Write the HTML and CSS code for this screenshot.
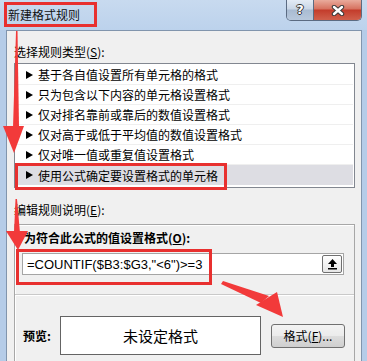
FILE: index.html
```html
<!DOCTYPE html>
<html lang="zh-CN">
<head>
  <meta charset="UTF-8" />
  <meta name="viewport" content="width=device-width, initial-scale=1.0" />
  <title>新建格式规则</title>
  <link rel="stylesheet" href="styles.css">
</head>
<body>
  <div class="window">
    <div class="titlebar">
      <span class="title">新建格式规则</span>
      <div class="controls">
        <div class="btn-help">?</div>
        <div class="btn-close">
          <svg width="14" height="11" viewBox="0 0 14 11">
            <path d="M3 2 L11 9 M11 2 L3 9" stroke="#3a3a3a" stroke-width="4.4" stroke-linecap="round" fill="none"/>
            <path d="M3 2 L11 9 M11 2 L3 9" stroke="#fff" stroke-width="2.4" stroke-linecap="round" fill="none"/>
          </svg>
        </div>
      </div>
    </div>

    <div class="client">
      <div class="label">选择规则类型(<u>S</u>):</div>
      <ul class="rule-list">
        <li>基于各自值设置所有单元格的格式</li>
        <li>只为包含以下内容的单元格设置格式</li>
        <li>仅对排名靠前或靠后的数值设置格式</li>
        <li>仅对高于或低于平均值的数值设置格式</li>
        <li>仅对唯一值或重复值设置格式</li>
        <li class="selected">使用公式确定要设置格式的单元格</li>
      </ul>

      <div class="label label-edit">编辑规则说明(<u>E</u>):</div>
      <div class="group">
        <div class="group-title">为符合此公式的值设置格式(<u>O</u>):</div>
        <div class="formula">
          <span class="formula-text">=COUNTIF($B3:$G3,"&lt;6")&gt;=3</span>
          <div class="collapse">
            <svg width="11" height="12" viewBox="0 0 11 12">
              <polygon points="5.5,1 1,6 10,6" fill="#000"/>
              <rect x="4" y="6" width="3" height="3" fill="#000"/>
              <rect x="1" y="10" width="9" height="1.5" fill="#000"/>
            </svg>
          </div>
        </div>
        <div class="sep"></div>
        <div class="preview-row">
          <span class="preview-label">预览:</span>
          <div class="preview">未设定格式</div>
          <div class="format-btn">格式(<u>F</u>)...</div>
        </div>
      </div>
    </div>

    <!-- annotations drawn over the dialog -->
    <svg class="marks" width="367" height="361" viewBox="0 0 367 361">
      <g fill="none" stroke="#e8302f" stroke-width="3">
        <rect x="5.5" y="3.5" width="90" height="22"/>
        <rect x="16.5" y="164.5" width="209" height="24"/>
        <rect x="17.5" y="250.5" width="193" height="33"/>
      </g>
      <g fill="#f23a3a">
        <polygon points="16,31 17.5,31 19,127 13,127"/>
        <polygon points="3,126 24,126 14,153"/>
        <polygon points="15.5,199 17,199 20,233 14,233"/>
        <polygon points="6,231 28,231 18,250"/>
        <polygon points="221,284 223,281 269,296 261,303"/>
        <polygon points="256,305 277,292 283,317"/>
      </g>
    </svg>
  </div>
</body>
</html>
```

FILE: styles.css
```css
body {
  margin: 0;
  background: #b7cde8;
  font-family: "Noto Sans CJK SC", "Microsoft YaHei", sans-serif;
  font-size: 12px;
  color: #000;
}

.window {
  position: relative;
  width: 367px;
  height: 361px;
  overflow: hidden;
  display: flex;
  flex-direction: column;
  background: #b5cce8;
}

.titlebar {
  flex: none;
  height: 30px;
  display: flex;
  align-items: flex-start;
  background: linear-gradient(#c8daef, #bcd2ec);
}

.title {
  padding: 7px 0 0 8px;
  line-height: 16px;
  color: #111;
}

.controls {
  margin-left: auto;
  margin-right: 5px;
  display: flex;
  height: 20px;
  border: 1px solid #5b6b82;
  border-top: none;
  border-radius: 0 0 5px 5px;
  overflow: hidden;
}

.btn-help {
  width: 26px;
  border-right: 1px solid #5b6b82;
  background: linear-gradient(#e3ebf5 0%, #c9d6e6 45%, #a9bbd2 50%, #b8c8dc 100%);
  color: #fff;
  font-family: "DejaVu Sans", sans-serif;
  font-weight: bold;
  font-size: 13px;
  line-height: 20px;
  text-align: center;
  text-shadow: 1px 0 #333, -1px 0 #333, 0 1px #333, 0 -1px #333;
}

.btn-close {
  width: 47px;
  display: flex;
  align-items: center;
  justify-content: center;
  background: linear-gradient(#e9ab9c 0%, #d6715f 45%, #c33c2b 50%, #d0604c 100%);
}

.client {
  flex: none;
  margin: 0 5px 0 6px;
  border: 1px solid #8195ad;
  border-bottom: none;
  background: #f0f0f0;
  padding: 13px 6px 0 7px;
}

.label {
  line-height: 16px;
}

.label-edit {
  margin-top: 14px;
}

.rule-list {
  list-style: none;
  margin: 3px 0 0;
  padding: 1px 1px 2px;
  background: #fff;
  border: 1px solid #828790;
}

.rule-list li {
  height: 19px;
  border-bottom: 1px solid #efefef;
  display: flex;
  align-items: center;
  gap: 5px;
  padding-left: 10px;
}

.rule-list li::before {
  content: "";
  border-left: 7px solid #000;
  border-top: 4px solid transparent;
  border-bottom: 4px solid transparent;
}

.rule-list li.selected {
  background: #dddde3;
  border-bottom: none;
  height: 20px;
}

.group {
  margin-top: 6px;
  border: 1px solid #a7a7a7;
  box-shadow: inset 1px 1px 0 #fff;
  padding-bottom: 12px;
}

.group-title {
  margin-top: 5px;
  padding-left: 9px;
  line-height: 16px;
  font-weight: bold;
}

.formula {
  margin: 7px 10px 0 7px;
  height: 20px;
  border: 1px solid #a5a5a5;
  background: #fff;
  display: flex;
  align-items: center;
}

.formula-text {
  padding-left: 4px;
  font-family: "Liberation Sans", Arial, sans-serif;
  font-size: 13px;
}

.collapse {
  margin-left: auto;
  margin-right: 1px;
  width: 18px;
  height: 16px;
  border: 1px solid #707070;
  border-radius: 2px;
  background: linear-gradient(#ffffff, #e6e6e6);
  display: flex;
  align-items: center;
  justify-content: center;
}

.sep {
  margin-top: 19px;
  height: 1px;
  background: #c9c9c9;
  border-bottom: 1px solid #fff;
}

.preview-row {
  margin-top: 20px;
  display: flex;
  align-items: center;
}

.preview-label {
  width: 37px;
  padding-left: 8px;
  font-weight: bold;
}

.preview {
  width: 199px;
  height: 37px;
  border: 1px solid #646464;
  background: #fff;
  font-size: 15px;
  display: flex;
  align-items: center;
  justify-content: center;
}

.format-btn {
  margin-left: 10px;
  width: 72px;
  height: 22px;
  border: 1px solid #707070;
  border-radius: 3px;
  background: linear-gradient(#f3f3f3 0%, #ebebeb 50%, #dddddd 50%, #cfcfcf 100%);
  line-height: 22px;
  text-align: center;
}

.marks {
  position: absolute;
  left: 0;
  top: 0;
  pointer-events: none;
}
```
